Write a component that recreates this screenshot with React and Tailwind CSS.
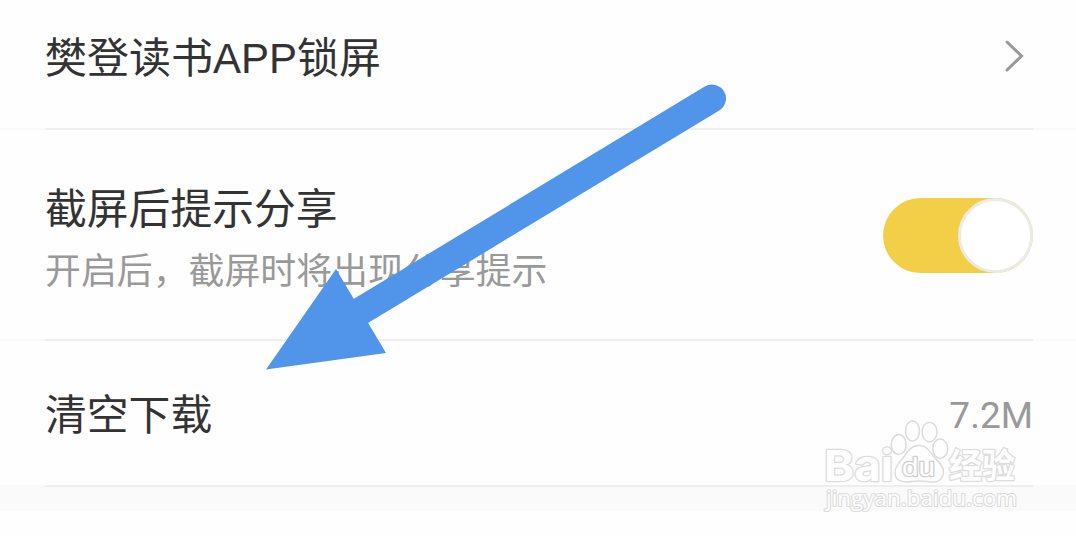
function Divider() {
  return (
    <div className="flex h-[2px] w-full shrink-0 bg-[#fafafa]">
      <div className="ml-[45px] mr-[43px] flex-1 bg-[#eeeeee]" />
    </div>
  );
}

function Toggle() {
  return (
    <button
      role="switch"
      aria-checked="true"
      className="flex h-[75px] w-[150px] justify-end rounded-full bg-[#f3cf48]"
    >
      <span className="size-[75px] rounded-full border-[3px] border-[#ebebe6] bg-white" />
    </button>
  );
}

function Arrow() {
  return (
    <svg
      className="pointer-events-none absolute left-0 top-0"
      width="1076"
      height="536"
      viewBox="0 0 1076 536"
    >
      <path d="M712 98.5L350 317.6" stroke="#5195ea" strokeWidth="28" strokeLinecap="round" />
      <path d="M336 269L386 353L266 369.5Z" fill="#5195ea" />
    </svg>
  );
}

function Watermark() {
  return (
    <svg
      className="pointer-events-none absolute left-[816px] top-[412px]"
      width="212"
      height="104"
      viewBox="0 0 212 104"
      fill="#fefefe"
      stroke="#dcdcdc"
      strokeWidth="1.5"
      strokeLinejoin="round"
    >
      <g fontWeight="700" paintOrder="stroke" strokeWidth="2.6">
        <text x="8" y="68.5" fontSize="43" fontFamily="Inter, sans-serif" textLength="69" lengthAdjust="spacingAndGlyphs">Bai</text>
        <text
          x="133"
          y="66"
          fontSize="34"
          fontFamily="'Noto Sans CJK SC', sans-serif"
          textLength="66"
          lengthAdjust="spacingAndGlyphs"
        >
          经验
        </text>
      </g>
      {/* paw */}
      <ellipse cx="82.7" cy="32.5" rx="7.5" ry="10" />
      <ellipse cx="96.5" cy="19" rx="7" ry="10" />
      <ellipse cx="113.5" cy="20" rx="7.5" ry="9.7" />
      <ellipse cx="124.2" cy="36.7" rx="7.5" ry="9.7" />
      <path d="M103 33.5C94 33.5 91 41 87 46C82 51 79 55 79 61C79 67 84 70 90 70C95 70 98 69 103 69C108 69 113 70 118 70C124 70 127.5 65 127.5 60C127.5 54 123 50 119 46C114 41 112 33.5 103 33.5Z" />
      <text
        x="86"
        y="63.5"
        fontSize="25"
        fontFamily="'Liberation Sans', sans-serif"
        stroke="#d0d0d0"
        strokeWidth="2.4"
        paintOrder="stroke"
        textLength="33"
        lengthAdjust="spacingAndGlyphs"
      >
        du
      </text>
      <text
        x="10"
        y="94"
        fontSize="22"
        fontFamily="'Open Sans', sans-serif"
        strokeWidth="2.2"
        paintOrder="stroke"
        textLength="191"
        lengthAdjust="spacingAndGlyphs"
      >
        jingyan.baidu.com
      </text>
    </svg>
  );
}

export default function App() {
  return (
    <div className="relative flex h-[536px] w-[1076px] flex-col overflow-hidden bg-[#fefefe] font-['Liberation_Sans','Noto_Sans_CJK_SC',sans-serif] text-[#333333]">
      <div className="flex h-[128px] items-start justify-between pl-[45px] pr-[52px] pt-[29px]">
        <h2 className="text-[42px] leading-[60px]">樊登读书APP锁屏</h2>
        <svg className="mt-[11px]" width="20" height="32" viewBox="0 0 20 32" fill="none" stroke="#999999" strokeWidth="3" strokeLinecap="round">
          <path d="M3 2L17.5 16L3 30" />
        </svg>
      </div>
      <Divider />

      <div className="flex h-[209px] items-center justify-between pl-[45px] pr-[43px] pt-[2px]">
        <div className="flex flex-col pt-[10px]">
          <h2 className="text-[41.8px] leading-[60px]">截屏后提示分享</h2>
          <p className="pt-[2px] text-[35.9px] leading-[60px] text-[#999999]">开启后，截屏时将出现分享提示</p>
        </div>
        <Toggle />
      </div>
      <Divider />

      <div className="flex h-[144px] items-center justify-between pl-[45px] pr-[43px] pt-[6px]">
        <h2 className="text-[41.8px] leading-[60px]">清空下载</h2>
        <span className="font-[Roboto,sans-serif] text-[37px] leading-[60px] text-[#999999]">7.2M</span>
      </div>
      <div className="h-[26px] bg-[#fafafa]">
        <Divider />
      </div>

      <Watermark />
      <Arrow />
    </div>
  );
}
